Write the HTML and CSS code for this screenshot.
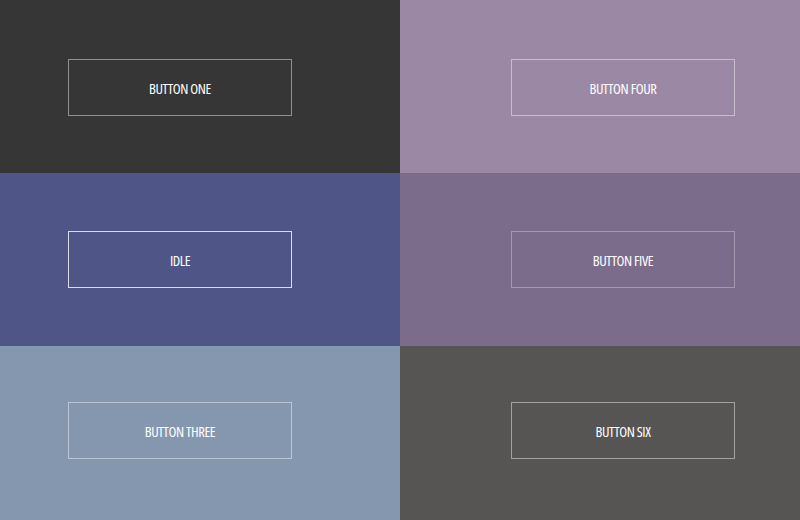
FILE: index.html
```html
<html>
<head>
<link rel="stylesheet" href="styles.css">
</head>
<body>
<div class="grid">
  <div class="cell left top dark"><button class="btn"><span>BUTTON ONE</span></button></div>
  <div class="cell right top lilac"><button class="btn"><span>BUTTON FOUR</span></button></div>
  <div class="cell left mid indigo"><button class="btn solid"><span>IDLE</span></button></div>
  <div class="cell right mid plum"><button class="btn faint"><span>BUTTON FIVE</span></button></div>
  <div class="cell left bottom steel"><button class="btn"><span>BUTTON THREE</span></button></div>
  <div class="cell right bottom ash"><button class="btn"><span>BUTTON SIX</span></button></div>
</div>
</body>
</html>
```

FILE: styles.css
```css
* {
  box-sizing: border-box;
}

body {
  margin: 0;
  width: 800px;
  height: 520px;
  overflow: hidden;
  font-family: "Open Sans", "DejaVu Sans", sans-serif;
}

.grid {
  display: grid;
  grid-template-columns: 400px 400px;
  grid-template-rows: 173px 173px 174px;
}

.cell {
  display: flex;
  align-items: flex-start;
}

.left { padding-left: 68px; }
.right { padding-left: 111px; }

.top { padding-top: 59px; }
.mid { padding-top: 58px; }
.bottom { padding-top: 56px; }

.dark { background: #363636; }
.lilac { background: #9b88a4; }
.indigo { background: #4f5587; }
.plum { background: #7c6c8b; }
.steel { background: #8597ae; }
.ash { background: #575553; }

.btn {
  width: 224px;
  height: 57px;
  background: transparent;
  border: 1px solid rgba(255, 255, 255, 0.45);
  color: #fff;
  font-family: inherit;
  font-size: 14.5px;
  font-weight: 500;
  padding: 0;
}

.btn span {
  display: inline-block;
  font-stretch: 75%;
  letter-spacing: -0.4px;
  padding-top: 1px;
}

.solid {
  border-color: rgba(255, 255, 255, 0.8);
}

.faint {
  border-color: rgba(255, 255, 255, 0.3);
}
```
